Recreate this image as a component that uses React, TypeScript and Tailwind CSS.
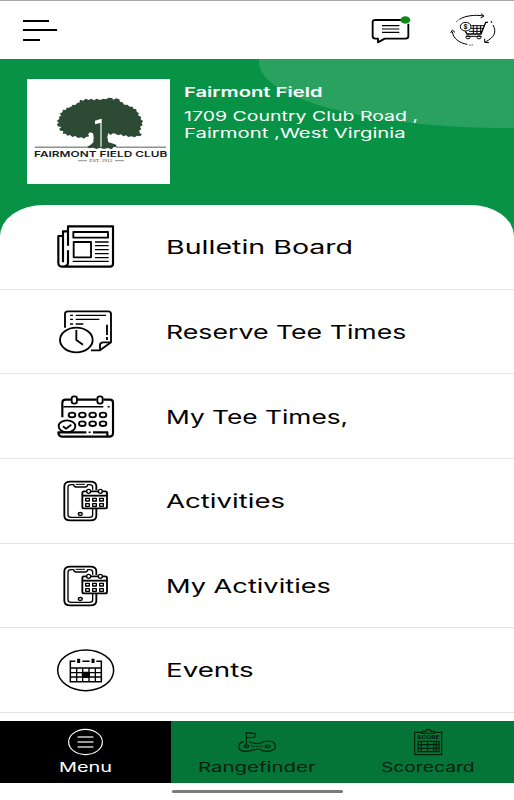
import { useLayoutEffect, useRef, useState, type ReactNode } from "react";
import clsx from "clsx";

// Stretches one line of text horizontally until it fills the given width
function WideText({ width, className, children }: { width: number; className?: string; children: string }) {
  const ref = useRef<HTMLSpanElement>(null);
  const [scale, setScale] = useState(1);

  useLayoutEffect(() => {
    if (ref.current) setScale(width / ref.current.offsetWidth);
  }, [width]);

  return (
    <span className={clsx("block whitespace-nowrap", className)} style={{ width }}>
      <span ref={ref} className="inline-block origin-left" style={{ transform: `scaleX(${scale})` }}>
        {children}
      </span>
    </span>
  );
}

function ChatIcon() {
  return (
    <svg viewBox="33 24 126 90" className="h-[30px] w-[42px]" fill="none" stroke="#000">
      <path d="M128 39H46Q38 39 38 46V88Q38 95 46 95H54V106L74 95H137Q145 95 145 88V50" strokeWidth="5.5" strokeLinejoin="round" />
      <path d="M66 56H118M66 66H118M66 76H118" strokeWidth="3.5" />
      <ellipse cx="136" cy="39" rx="15" ry="11" fill="#0b8a17" stroke="none" />
    </svg>
  );
}

function CartIcon() {
  return (
    <svg viewBox="267 21 144 108" className="h-9 w-12" fill="none" stroke="#000" strokeWidth="3">
      <path d="M289 51C302 35 338 27 370 33" strokeDasharray="3 3 3 3 200" />
      <path d="M363 26L372 33L362 39" />
      <path d="M393 48l3 6M399 60C410 80 405 96 376 111M374 101L374 112L387 113" />
      <path d="M277 80C279 99 296 114 322 118M272 84L277 75L285 82" />
      <path d="M327 120h12" strokeDasharray="2 3" />
      <ellipse cx="317" cy="65" rx="16" ry="13" />
      <text x="317" y="72" textAnchor="middle" fill="#000" stroke="none" className="font-[Inter] text-[19px] font-bold">$</text>
      <path d="M334 62H373M331 70H370M327 79H366M340 62V86M351 62V86M362 62V86" />
      <path d="M384 52H377L363 87H321L316 79" strokeWidth="4" />
      <path d="M318 94H365" />
      <ellipse cx="324" cy="97" rx="6" ry="4.5" />
      <ellipse cx="357" cy="97" rx="6" ry="4.5" />
    </svg>
  );
}

function ClubLogo() {
  return (
    <div className="h-[105px] w-[143px] bg-white">
      <svg viewBox="21 21 429 315" className="size-full">
        <path
          fill="#2d4a35"
          d="M147 107L155 103L158 98L166 99L172 92L178 92L180 83L190 86L196 80L206 84L214 80L222 85L230 80L240 84L250 80L258 82L266 77L276 78L280 83L288 79L298 82L300 89L308 91L312 98L322 98L330 104L338 104L340 110L349 112L350 119L357 124L354 130L363 134L362 142L369 147L365 154L368 160L360 164L364 172L357 176L360 184L366 187L360 193L351 191L344 196L334 193L325 195L318 190L310 193L303 187L295 190L286 185L279 184L272 189L265 183L262 195L265 211L276 214L288 218L290 224L280 226L275 232L263 228L252 231L240 227L230 231L219 227L207 229L202 224L212 218L220 211L221 195L219 184L210 181L204 187L208 193L198 195L192 200L184 196L174 198L166 192L157 195L150 189L141 191L138 185L128 185L130 177L120 176L118 170L124 165L113 163L111 156L117 152L110 147L118 141L117 134L124 131L119 125L128 120L128 113L137 114L140 107Z"
        />
        <path d="M243 141V224" stroke="#fff" strokeWidth="3.5" />
        <path d="M244 140l-19 6v11l19-5z" fill="#fff" />
        <path d="M44 225.5H206M288 225.5H438" stroke="#29402f" strokeWidth="2.5" />
        <text x="42" y="254" textLength="400" lengthAdjust="spacingAndGlyphs" fill="#151b22" className="font-[Inter] text-[24px] font-semibold">
          FAIRMONT FIELD CLUB
        </text>
        <text x="208" y="270" textLength="70" lengthAdjust="spacingAndGlyphs" fill="#444" className="font-['Liberation_Serif'] text-[12px]">
          EST. 1912
        </text>
        <path d="M174 266H201M285 266H312" stroke="#555" strokeWidth="2" />
      </svg>
    </div>
  );
}

function RowIcon({ viewBox, children }: { viewBox: string; children: ReactNode }) {
  return (
    <svg viewBox={viewBox} className="mt-px h-[50px] w-[60px] shrink-0" fill="none" stroke="#000" strokeWidth="5.5" strokeLinejoin="round">
      {children}
    </svg>
  );
}

function NewspaperIcon() {
  return (
    <RowIcon viewBox="48 37 180 150">
      <path d="M84 108V50H219V162Q219 171 209 171H68Q55 171 55 160V79H67M84 122V160Q82 171 70 171M69 158V65H83" strokeWidth="6.5" />
      <path d="M100 67H204V84H100ZM101 97H153V143H101Z" />
      <path d="M165 97H206M165 108H206M165 120H206M165 132H206M165 144H206M98 155H206" strokeWidth="4" />
    </RowIcon>
  );
}

function TeeTimeIcon() {
  return (
    <RowIcon viewBox="48 36 180 150">
      <path d="M75 98V57Q75 49 83 49H205Q213 49 213 57V142L180 166H153" />
      <path d="M180 165V150Q180 142 190 142H212" />
      <ellipse cx="109" cy="135" rx="49" ry="37" />
      <path d="M109 105V135L129 149" />
      <path d="M90 61H99M107 61H198M90 73H99M107 73H178M90 87H99M107 87H130" strokeWidth="4" />
      <path d="M201 89V120M201 126V135" />
    </RowIcon>
  );
}

function BookedIcon() {
  return (
    <RowIcon viewBox="48 35 180 150">
      <path d="M67 111V67Q67 58 78 58H94M112 58H170M190 58H209Q219 58 219 67V159Q219 169 207 169H66Q56 168 55 156H139M159 156H202V167" strokeWidth="6.5" />
      <rect x="95" y="48" width="16" height="22" rx="7" />
      <rect x="172" y="48" width="16" height="22" rx="7" />
      <path d="M70 79H190M203 79H209M146 156H152" strokeWidth="4.5" />
      {[96, 127, 158, 189].map((cx) => (
        <ellipse key={cx} cx={cx} cy="104" rx="10" ry="7" />
      ))}
      {[127, 158, 189].map((cx) => (
        <ellipse key={cx} cx={cx} cy="130" rx="10" ry="7" />
      ))}
      <ellipse cx="81" cy="138" rx="25" ry="18" />
      <path d="M69 138L78 145L94 133" />
    </RowIcon>
  );
}

function ActivityIcon() {
  return (
    <RowIcon viewBox="48 33 180 150">
      <path d="M169 75V64Q169 50 151 50H91Q73 50 73 64V152Q73 166 91 166H151Q169 166 169 152V131" />
      <path d="M158 74V66Q158 59 148 59H143Q142 66 136 66H108Q102 66 101 59H94Q84 59 84 66V150Q84 157 94 157H148Q158 157 158 150V131" strokeWidth="4" />
      <path d="M107 58H135" strokeWidth="3" />
      <ellipse cx="121" cy="147" rx="6" ry="4.5" strokeWidth="4" />
      <rect x="127" y="79" width="74" height="51" rx="5" fill="#fff" />
      <path d="M128 92H200" />
      <ellipse cx="146" cy="79" rx="6" ry="6" fill="#fff" strokeWidth="4" />
      <ellipse cx="181" cy="79" rx="6" ry="6" fill="#fff" strokeWidth="4" />
      {[142, 163, 184].map((x) => (
        <path key={x} d={`M${x - 5} 100h11v8h-11zM${x - 5} 116h11v8h-11z`} strokeWidth="4" />
      ))}
    </RowIcon>
  );
}

function EventIcon() {
  return (
    <RowIcon viewBox="48 32 180 150">
      <ellipse cx="137" cy="105" rx="84" ry="61" strokeWidth="4.5" />
      <path d="M106 78H91V139H184V78H169M127 78H149" strokeWidth="4.5" strokeLinejoin="miter" />
      <path d="M91 98H184M91 112H184M91 125H184M110 98V139M128 98V139M147 98V139M166 98V139" strokeWidth="4" />
      <path d="M128 112H147V125H128Z" fill="#000" />
      <path d="M116 70V83M159 70V83" strokeWidth="9" />
    </RowIcon>
  );
}

function MenuIcon() {
  return (
    <svg viewBox="198 81 118 90" className="h-[30px] w-[39px]" fill="none" stroke="#fff">
      <ellipse cx="257" cy="126" rx="51" ry="38" strokeWidth="3.5" />
      <path d="M233 111H281M233 126H281M233 141H281" stroke="#ccc" strokeWidth="4.5" />
    </svg>
  );
}

function RangeIcon() {
  return (
    <svg viewBox="708 81 126 90" className="h-[30px] w-[42px]" fill="none" stroke="#06200d" strokeWidth="3.5">
      <path d="M739 139V98L767 101L763 112L740 113" />
      <path d="M731 125C712 129 711 151 733 154C752 156 762 145 779 148C796 159 826 155 826 138C826 122 798 119 782 129C769 133 757 129 748 125" />
      <ellipse cx="739" cy="139" rx="7" ry="4" />
      <ellipse cx="803" cy="139" rx="7" ry="4" />
      <path d="M753 139H792" strokeDasharray="4 4" />
    </svg>
  );
}

function ScoreIcon() {
  return (
    <svg viewBox="465 81 96 90" className="h-[30px] w-8" fill="none" stroke="#06200d" strokeWidth="3.5">
      <path d="M496 97H473V164H554V97H531" />
      <path d="M496 100V94H506Q507 88 514 88Q521 88 522 94H532V100Z" />
      <text x="481" y="116" textLength="66" lengthAdjust="spacingAndGlyphs" fill="#06200d" stroke="none" className="font-[Inter] text-[15px] font-extrabold">
        SCORE
      </text>
      <path d="M483 124H546V155H483ZM483 134H546M483 145H546M493 124V155M512 124V155M530 124V155M538 124V155" />
    </svg>
  );
}

const rows = [
  { label: "Bulletin Board", width: 187, icon: <NewspaperIcon /> },
  { label: "Reserve Tee Times", width: 240, icon: <TeeTimeIcon /> },
  { label: "My Tee Times,", width: 182, icon: <BookedIcon /> },
  { label: "Activities", width: 119, icon: <ActivityIcon /> },
  { label: "My Activities", width: 165, icon: <ActivityIcon /> },
  { label: "Events", width: 87, icon: <EventIcon /> },
];

const tabs = [
  { label: "Menu", width: 53, icon: <MenuIcon />, active: true },
  { label: "Rangefinder", width: 118, icon: <RangeIcon /> },
  { label: "Scorecard", width: 94, icon: <ScoreIcon /> },
];

export default function App() {
  return (
    <div className="flex h-[800px] w-[514px] flex-col overflow-hidden bg-white font-[Inter,sans-serif]">
      <header className="flex h-[59px] shrink-0 items-center border-t border-[#a8a8a8] pl-[23px]">
        <div className="flex flex-col gap-[7.5px]">
          <div className="h-[2px] w-[26px] bg-black" />
          <div className="h-[2px] w-[34px] bg-black" />
          <div className="h-[2px] w-[17px] bg-black" />
        </div>
        <div className="mr-[17px] ml-auto flex items-center gap-9">
          <ChatIcon />
          <CartIcon />
        </div>
      </header>

      <section className="relative h-[146px] shrink-0 overflow-hidden bg-[#089245]">
        <div className="absolute -top-[63px] left-[259px] h-[132px] w-[492px] rounded-[50%] bg-[#2aa15f]" />
        <div className="relative flex gap-[14px] pt-5 pl-[27px] text-white">
          <ClubLogo />
          <div className="pt-[5px] text-[13.5px] leading-[17px]">
            <WideText width={139} className="mb-[7px] font-semibold">Fairmont Field</WideText>
            <WideText width={234}>1709 Country Club Road ,</WideText>
            <WideText width={221}>Fairmont ,West Virginia</WideText>
          </div>
        </div>
      </section>

      <main className="h-[515.5px] shrink-0 overflow-hidden bg-[#089245]">
        <ul className="h-full bg-white [border-radius:44px_44px_0_0/31px_31px_0_0]">
          {rows.map((row) => (
            <li key={row.label} className="flex h-[84.65px] items-center gap-[50px] border-b border-[#e4e4e4] pl-14">
              {row.icon}
              <WideText width={row.width} className="pt-[3px] text-[18.8px]">{row.label}</WideText>
            </li>
          ))}
        </ul>
      </main>

      <nav className="grid h-[62.5px] shrink-0 grid-cols-3 bg-[#047536]">
        {tabs.map((tab) => (
          <div
            key={tab.label}
            className={clsx("flex flex-col items-center pt-[6.5px]", tab.active ? "bg-black text-white" : "text-[#06200d]")}
          >
            {tab.icon}
            <WideText width={tab.width} className="mt-0.5 text-[13.5px] leading-4">{tab.label}</WideText>
          </div>
        ))}
      </nav>

      <div className="mx-auto mt-[6.5px] h-[3px] w-[171px] rounded-full bg-[#7b7b7b]" />
    </div>
  );
}
